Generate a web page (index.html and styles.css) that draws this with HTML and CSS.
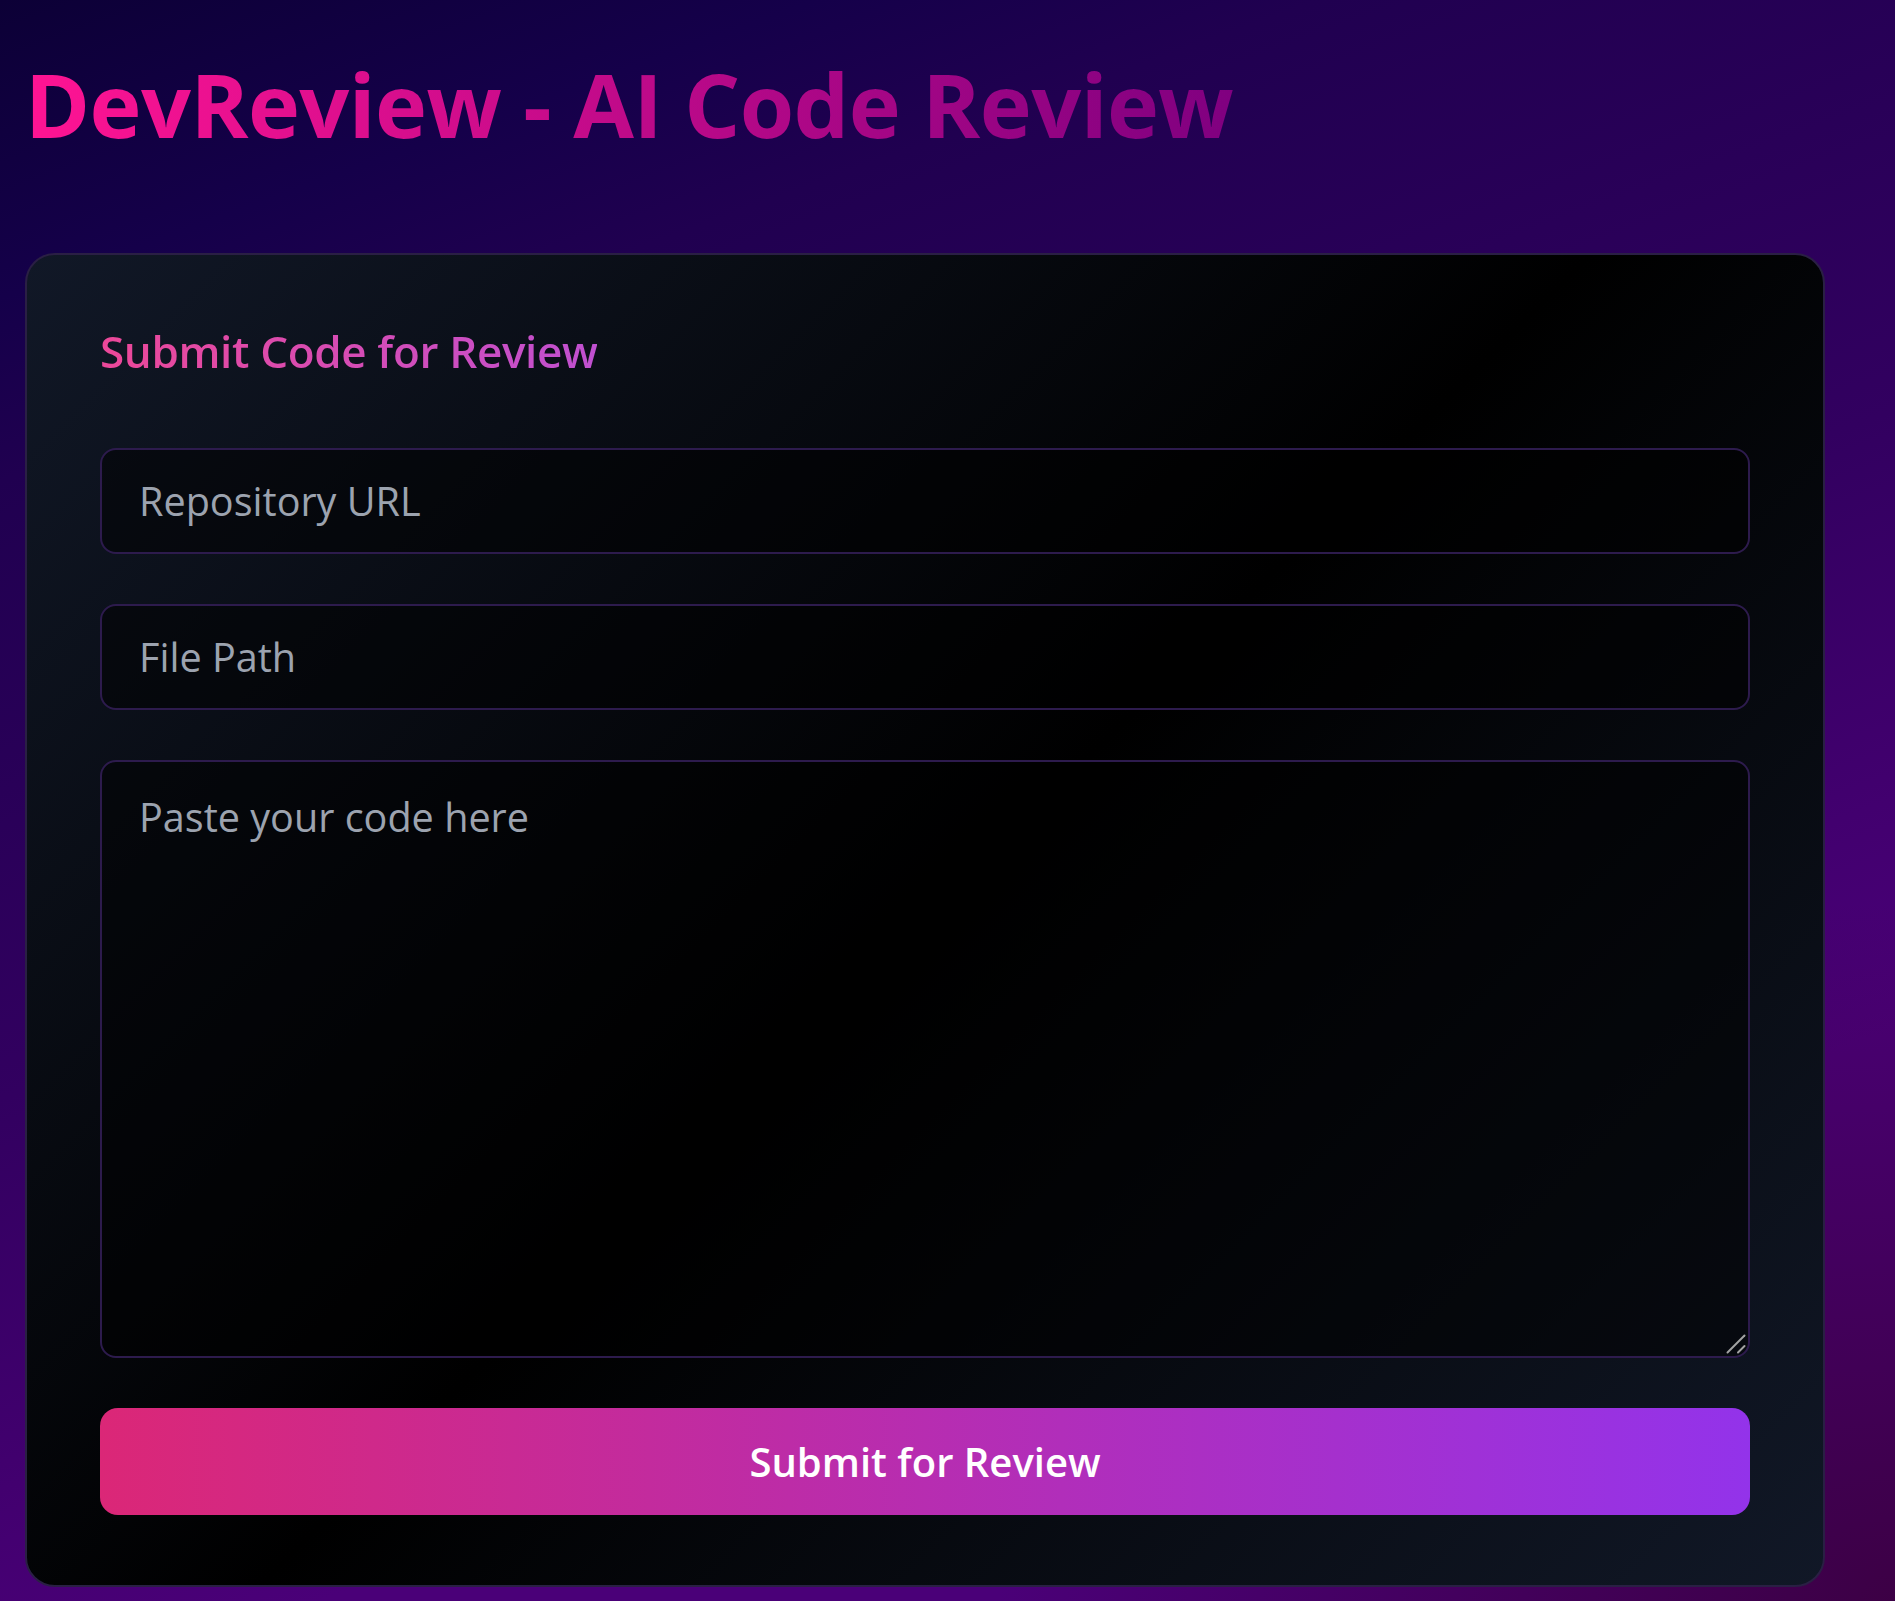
FILE: index.html
```html
<!DOCTYPE html>
<html lang="en">
<head>
<meta charset="utf-8">
<title>DevReview - AI Code Review</title>
<link rel="stylesheet" href="styles.css">
</head>
<body>
<main class="page">
  <h1 class="app-title">DevReview - AI Code Review</h1>
  <section class="card">
    <h2 class="card-title">Submit Code for Review</h2>
    <form class="review-form">
      <input class="field" type="text" placeholder="Repository URL">
      <input class="field" type="text" placeholder="File Path">
      <div class="code-wrap">
        <textarea class="field field-code" placeholder="Paste your code here"></textarea>
        <svg class="resize-grip" viewBox="0 0 20 20" width="20" height="20" aria-hidden="true">
          <line x1="1.5" y1="18.5" x2="18.5" y2="1.5"></line>
          <line x1="12" y1="18.5" x2="18.5" y2="12"></line>
        </svg>
      </div>
      <button class="submit-btn" type="button">Submit for Review</button>
    </form>
  </section>
</main>
</body>
</html>
```

FILE: styles.css
```css
* {
  box-sizing: border-box;
}

html,
body {
  margin: 0;
}

body {
  min-height: 1601px;
  overflow: hidden;
  font-family: "Open Sans", "Noto Sans", sans-serif;
  background:
    radial-gradient(ellipse 900px 700px at 100% 100%, rgba(58, 0, 60, 0.85), rgba(58, 0, 60, 0) 100%),
    linear-gradient(160deg, #0c0036 0%, #15004a 13%, #200050 21%, #320060 48%, #42006f 65%, #4a0078 75%, #4a0078 100%);
}

.page {
  padding: 50px 0 0 25px;
}

.app-title {
  width: fit-content;
  margin: 0;
  font-size: 88px;
  line-height: 108px;
  letter-spacing: -0.6px;
  font-weight: 700;
  background: linear-gradient(90deg, #ff1493, #800080);
  -webkit-background-clip: text;
  background-clip: text;
  color: transparent;
}

.card {
  width: 1800px;
  margin-top: 95px;
  padding: 68px 73px 70px;
  border: 2px solid #2a1f44;
  border-radius: 30px;
  background: linear-gradient(135deg, #111827 0%, #000000 50%, #111827 100%);
}

.card-title {
  width: fit-content;
  margin: 0 0 69px;
  font-size: 44px;
  line-height: 56px;
  letter-spacing: -0.35px;
  font-weight: 600;
  background: linear-gradient(90deg, #ec4899, #c050d0);
  -webkit-background-clip: text;
  background-clip: text;
  color: transparent;
}

.review-form {
  display: flex;
  flex-direction: column;
  gap: 50px;
}

.field {
  display: block;
  width: 100%;
  height: 106px;
  padding: 0 37px;
  border: 2px solid #2d1b4d;
  border-radius: 16px;
  background: rgba(0, 0, 0, 0.5);
  color: #e5e7eb;
  font-family: inherit;
  font-size: 39.6px;
  outline: none;
}

.field::placeholder {
  color: #9ca3af;
}

.code-wrap {
  position: relative;
}

.field-code {
  height: 598px;
  padding: 25px 37px;
  line-height: 60px;
  resize: none;
}

.resize-grip {
  position: absolute;
  right: 4px;
  bottom: 4px;
  pointer-events: none;
}

.resize-grip line {
  stroke: #a3a3a3;
  stroke-width: 2;
  stroke-linecap: round;
}

.submit-btn {
  height: 107px;
  border: none;
  border-radius: 18px;
  background: linear-gradient(90deg, #db2777, #9333ea);
  color: #ffffff;
  font-family: inherit;
  font-size: 40px;
  font-weight: 600;
  cursor: pointer;
}
```
